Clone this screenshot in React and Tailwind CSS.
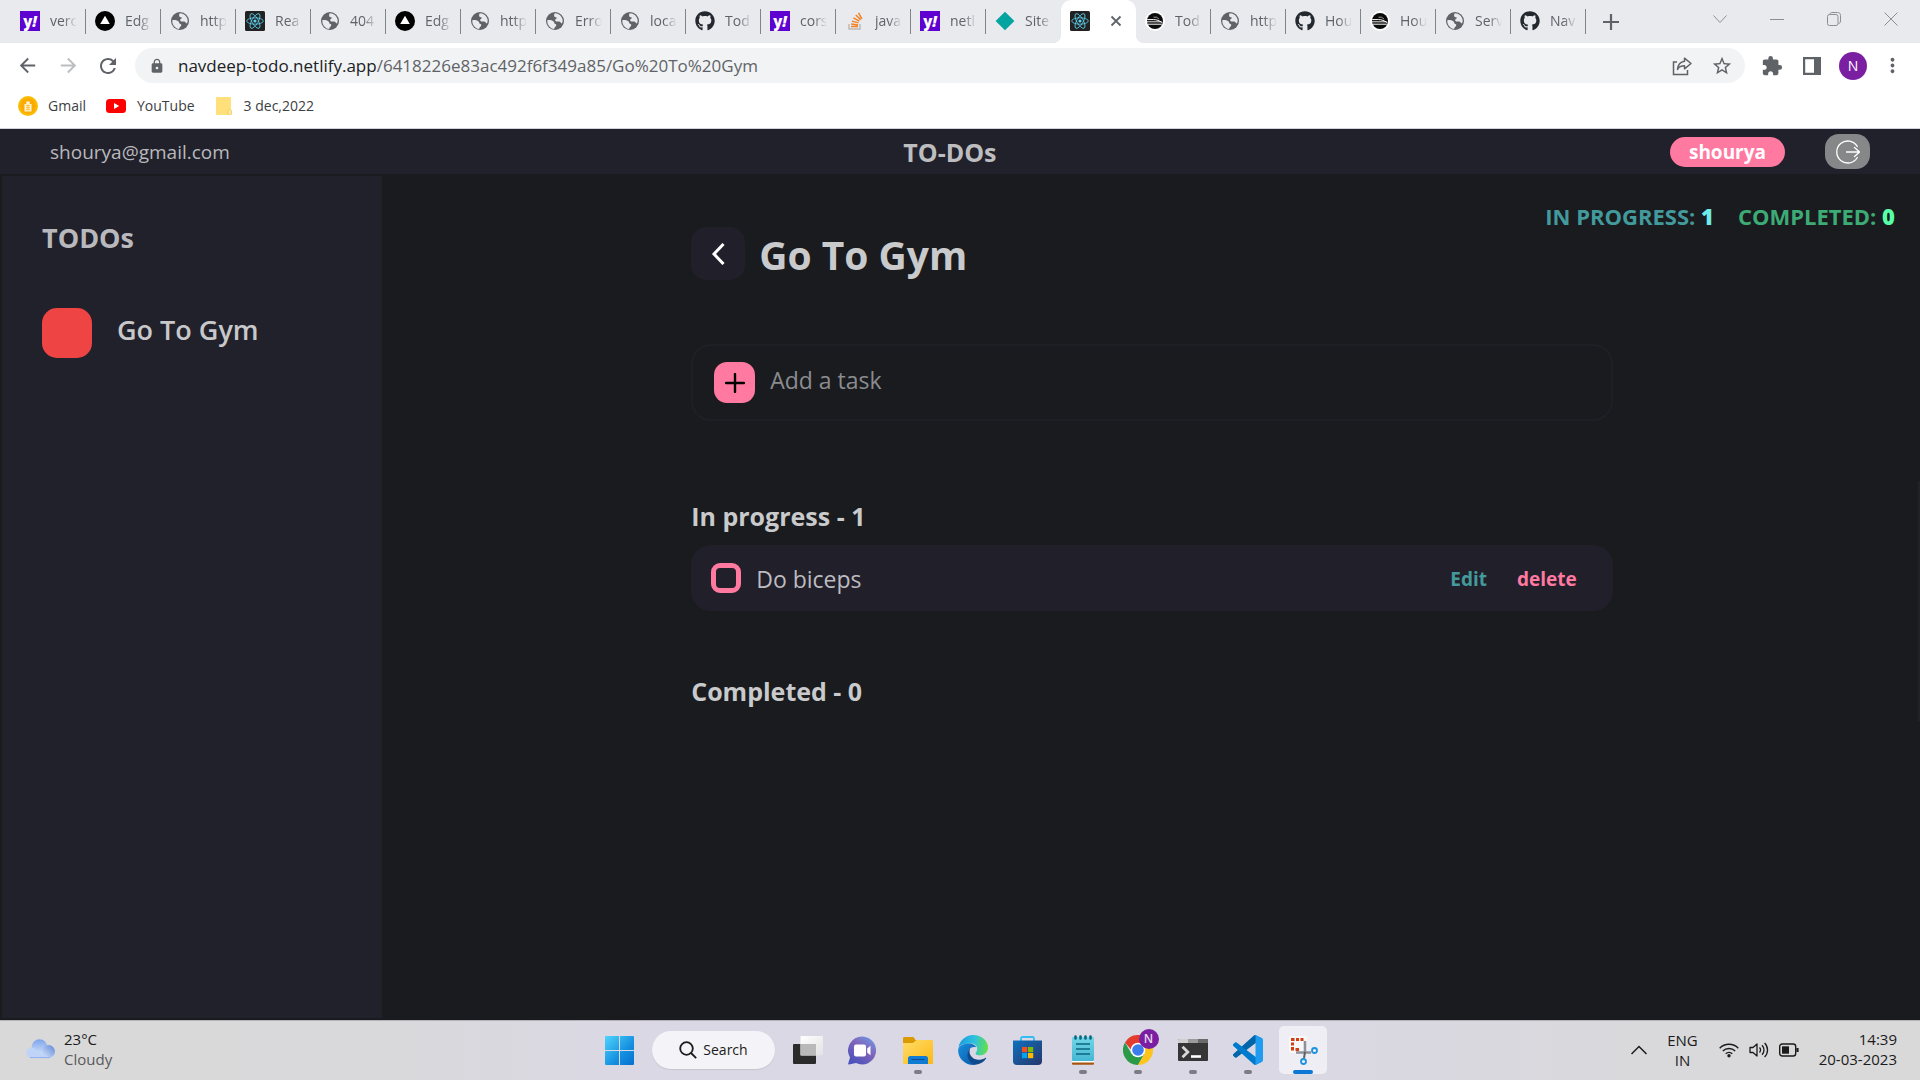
import React from "react";
import { FaGithub } from "react-icons/fa";
import {
  MdArrowBack,
  MdArrowForward,
  MdExtension,
  MdLock,
  MdMoreVert,
  MdRefresh,
  MdStarOutline,
} from "react-icons/md";

/* ---------- favicons ---------- */

function Yahoo() {
  return (
    <span className="flex size-5 items-center justify-center bg-[#5f01d1] text-[15px] leading-5 font-extrabold text-white">
      y<i>!</i>
    </span>
  );
}

function Vercel() {
  return (
    <svg viewBox="0 0 20 20" className="size-5">
      <circle cx="10" cy="10" r="10" fill="#000" />
      <path d="M10 4.8 14.8 13H5.2z" fill="#fff" />
    </svg>
  );
}

function Globe() {
  return (
    <svg viewBox="0 0 20 20" className="size-5">
      <circle cx="10" cy="10" r="9" fill="#5f6368" />
      <path
        d="M2.300 9.200c2.200-.3 4.600 0 6 1.100 1.200 1 .6 2.300 2 2.600 1.300.2 1.200 1.600.3 2.500-.9.800-1.400 1.500-1.500 2.500-3.700-.4-7.100-3.700-6.800-8.700z"
        fill="#e8eaed"
      />
      <path
        d="M9.800 2.200c3.500-.2 7.800 2.900 7.900 7.400-.1 1.300-.3 2-.7 2.900-1-.2-1.200-1.300-2.200-1.800-1.300-.5-3.300.3-4.300-.7-.8-.9-.1-2 .9-2.400 1-.3.500-1.200-.6-1.300-1.400-.2-1.900-1.300-1.700-2.300.1-.8.200-1.300.7-1.800z"
        fill="#e8eaed"
      />
    </svg>
  );
}

function ReactLogo() {
  return (
    <svg viewBox="0 0 20 20" className="size-5">
      <rect width="20" height="20" rx="1.5" fill="#222" />
      <g fill="none" stroke="#5ccfee" strokeWidth=".8">
        <ellipse cx="10" cy="10" rx="8.3" ry="3.2" />
        <ellipse cx="10" cy="10" rx="8.3" ry="3.2" transform="rotate(60 10 10)" />
        <ellipse cx="10" cy="10" rx="8.3" ry="3.2" transform="rotate(120 10 10)" />
      </g>
      <circle cx="10" cy="10" r="1.6" fill="#5ccfee" />
    </svg>
  );
}

function Github() {
  return <FaGithub className="size-5 text-[#24292f]" />;
}

function Stack() {
  return (
    <svg viewBox="0 0 20 20" className="size-5" fill="none" strokeWidth="1.5">
      <path d="M4 13v5h11v-5" stroke="#bcbbbb" />
      <path
        d="M6 15.6h7M6.2 13.1l6.9.8M6.9 10.1l6.6 1.8M8.4 6.9l6 3.3M10.8 4l4.9 4.8M13.6 1.8l3.2 6"
        stroke="#f48024"
      />
    </svg>
  );
}

function Diamond() {
  return (
    <svg viewBox="0 0 20 20" className="size-5">
      <path d="M10 .8 19.4 10 10 19.2.6 10z" fill="#05a4a0" />
    </svg>
  );
}

function Train() {
  return (
    <svg viewBox="0 0 20 20" className="size-5">
      <circle cx="10" cy="10" r="10" fill="#fff" />
      <circle cx="10" cy="10" r="8" fill="#0b0b0b" />
      <g stroke="#fff" fill="none">
        <path d="M2.2 8.6h6.5c3 0 5.5 1 8.6 3.1" strokeWidth="1" />
        <path d="M2 10.8h14.5" strokeWidth=".9" />
        <path d="M2.6 13.2h14.2" strokeWidth="1" />
        <path d="M8.5 6.2h3l2.6 1.9" strokeWidth=".6" />
      </g>
    </svg>
  );
}

const tabs = [
  ["verc", Yahoo],
  ["Edg", Vercel],
  ["http", Globe],
  ["Rea", ReactLogo],
  ["404", Globe],
  ["Edg", Vercel],
  ["http", Globe],
  ["Erro", Globe],
  ["loca", Globe],
  ["Tod", Github],
  ["cors", Yahoo],
  ["java", Stack],
  ["netl", Yahoo],
  ["Site", Diamond],
  ["", ReactLogo],
  ["Tod", Train],
  ["http", Globe],
  ["Hou", Github],
  ["Hou", Train],
  ["Serv", Globe],
  ["Nav", Github],
];
const ACTIVE = 14;

function TabStrip() {
  return (
    <div className="flex h-[43px] items-stretch bg-[#e8eaed] pl-[11px]">
      <div role="tablist" className="flex min-w-0">
        {tabs.map(([label, Icon], i) =>
          i === ACTIVE ? (
            <div key={i} role="tab" aria-selected="true" className="relative flex w-[75px] items-center rounded-t-[10px] bg-white pb-[2px] pl-[9px]">
              <span className="absolute bottom-0 -left-2 size-2 bg-[radial-gradient(circle_at_0_0,#e8eaed_8px,#fff_8px)]" />
              <Icon />
              <button aria-label="Close tab" className="ml-[20px]">
                <svg viewBox="0 0 12 12" className="size-3 stroke-[#5f6368]" strokeWidth="1.8">
                  <path d="m1.5 1.5 9 9m0-9-9 9" />
                </svg>
              </button>
              <span className="absolute -right-2 bottom-0 size-2 bg-[radial-gradient(circle_at_100%_0,#e8eaed_8px,#fff_8px)]" />
            </div>
          ) : (
            <button
              key={i}
              role="tab"
              aria-selected="false"
              className="flex w-[75px] items-center"
            >
              <span className="flex w-[74px] items-center gap-[10px] pb-[2px] pl-[9px]">
                <span className="flex size-5 shrink-0 items-center justify-center">
                  <Icon />
                </span>
                <span className="w-[27px] overflow-hidden text-left text-[14px] leading-5 whitespace-nowrap text-[#5f6368] [mask-image:linear-gradient(to_right,#000_50%,transparent)]">
                  {label}
                </span>
              </span>
              {i !== ACTIVE - 1 && <span className="h-[25px] w-px bg-[#808387]" />}
            </button>
          )
        )}
      </div>
      <button aria-label="New tab" className="ml-[17px]">
        <svg viewBox="0 0 16 16" className="size-4 stroke-[#5f6368]" strokeWidth="2.200">
          <path d="M8 0v16M0 8h16" />
        </svg>
      </button>
      <div className="ml-auto flex items-center gap-[43px] pr-[22px] pb-[6px]">
        <button aria-label="Search tabs">
          <svg viewBox="0 0 14 14" className="size-[14px] fill-none stroke-[#8c8e91]">
            <path d="m.5 3.500 6.500 7 6.500-7" />
          </svg>
        </button>
        <button aria-label="Minimize">
          <svg viewBox="0 0 14 14" className="size-[14px] fill-none stroke-[#8c8e91]">
            <path d="M0 7.500h14" />
          </svg>
        </button>
        <button aria-label="Restore">
          <svg viewBox="0 0 14 14" className="size-[14px] fill-none stroke-[#8c8e91]">
            <rect x=".5" y="2.500" width="10.500" height="11" rx="2" />
            <path d="M3 2.500C3 1 4 .5 5 .5h5.500c2 0 3 1 3 3V9c0 1.500-.8 2.500-2 2.500" />
          </svg>
        </button>
        <button aria-label="Close">
          <svg viewBox="0 0 14 14" className="size-[14px] fill-none stroke-[#8c8e91]">
            <path d="m.5.5 13 13m0-13-13 13" />
          </svg>
        </button>
      </div>
    </div>
  );
}

function Toolbar() {
  return (
    <div className="flex h-[45px] items-center bg-white pr-4 pl-4 text-[#5f6368]">
      <button aria-label="Back" className="mr-[18px]">
        <MdArrowBack className="size-[23px]" />
      </button>
      <button aria-label="Forward" className="mr-4 text-[#bbbdc0]">
        <MdArrowForward className="size-[23px]" />
      </button>
      <button aria-label="Reload" className="mr-[15px]">
        <MdRefresh className="size-6" />
      </button>
      <div className="flex h-[35px] min-w-0 flex-1 items-center rounded-full bg-[#f1f3f4] pr-[12px] pl-[14px]">
        <MdLock className="size-4 shrink-0" />
        <div className="ml-[13px] min-w-0 flex-1 truncate text-[17px] leading-6">
          <span className="text-[#202124]">navdeep-todo.netlify.app</span>
          /6418226e83ac492f6f349a85/Go%20To%20Gym
        </div>
        <button aria-label="Share" className="mr-[19px]">
          <svg viewBox="0 0 20 20" className="size-5 fill-none stroke-current" strokeWidth="1.500">
            <path d="M5 6H1.500v12.500h14V14" />
            <path d="M12.500 2.200 19 7.500l-6.500 5.300V9.800c-3.500 0-5.700 1.300-7 3.700.4-4.500 2.700-7.500 7-8.200z" strokeLinejoin="round" />
          </svg>
        </button>
        <button aria-label="Bookmark this page">
          <MdStarOutline className="size-[22px]" />
        </button>
      </div>
      <button aria-label="Extensions" className="ml-4">
        <MdExtension className="size-[22px]" />
      </button>
      <button aria-label="Side panel" className="ml-5">
        <svg viewBox="0 0 18 18" className="size-[18px]">
          <path fill="currentColor" fillRule="evenodd" d="M0 0h18v18H0zM2.200 2.200v13.600H11V2.200z" />
        </svg>
      </button>
      <button className="ml-[18px] flex size-7 items-center justify-center rounded-full bg-[#7b1fa2] text-[14px] text-white">
        N
      </button>
      <button aria-label="Menu" className="ml-[14px]">
        <MdMoreVert className="size-[23px]" />
      </button>
    </div>
  );
}

function Bookmarks() {
  return (
    <nav className="flex h-[41px] items-center border-b border-[#d5d0e0] bg-white pb-[4px] pl-[18px] text-[14px] leading-5 text-[#3c4043]">
      <a href="#gmail" className="flex items-center gap-[10px]">
        <svg viewBox="0 0 20 20" className="size-5">
          <circle cx="10" cy="10" r="10" fill="#fbbc04" />
          <circle cx="10" cy="10" r="7.800" fill="#f9ab00" />
          <path d="M6.500 8h7v7.500h-7zM8.300 5.500h3.400V8H8.300z" fill="#fff4d6" />
          <path d="M8 9.500h4M8 11.500h4M8 13.500h4M9.300 8.500v6M10.800 8.500v6" stroke="#f9ab00" strokeWidth=".5" />
        </svg>
        Gmail
      </a>
      <a href="#youtube" className="ml-5 flex items-center gap-[11px]">
        <svg viewBox="0 0 20 14" className="h-[14px] w-5">
          <rect width="20" height="14" rx="3.500" fill="#f00" />
          <path d="m8 4 5.200 3L8 10z" fill="#fff" />
        </svg>
        YouTube
      </a>
      <a href="#folder" className="ml-[21px] flex items-center gap-[12px]">
        <svg viewBox="0 0 16 18" className="h-[18px] w-4">
          <rect width="15" height="18" rx="1" fill="#ffe07a" />
          <path d="M12 18v-4c0-2 3.500-2 3.500 0v3c0 .6-.4 1-1 1z" fill="#ffe9a2" stroke="#f0c64a" strokeWidth=".7" />
        </svg>
        3 dec,2022
      </a>
    </nav>
  );
}

/* ---------- to-do page ---------- */

function TodoHeader() {
  return (
    <header className="flex h-[45px] items-center justify-between bg-[#21212b] px-[50px]">
      <span className="text-[19px] leading-6 text-[#b9b9bd]">shourya@gmail.com</span>
      <h1 className="text-[25px] leading-8 font-bold text-[#bdbdc0]">TO-DOs</h1>
      <div className="flex items-center gap-[40px]">
        <button className="h-[30px] w-[115px] rounded-[15px] bg-[#ff79a1] text-[19px] leading-[30px] font-bold text-white">
          shourya
        </button>
        <button
          aria-label="Log out"
          className="flex h-[35px] w-[45px] items-center justify-center rounded-[14px] bg-[#868789]"
        >
          <svg viewBox="0 0 24 24" className="size-6 fill-none stroke-white" strokeWidth="1.300" strokeLinecap="round">
            <path d="M21.300 6.500a11 11 0 1 0 0 11" />
            <path d="M10.500 12h13M18.500 7.500l5 4.500-5 4.500" />
          </svg>
        </button>
      </div>
    </header>
  );
}

function Sidebar() {
  return (
    <aside className="flex w-1/5 p-[2px]">
      <div className="flex-1 bg-[#21212b] px-[40px] pt-[42px]">
        <h2 className="text-[27px] leading-10 font-bold text-[#b9b9bd]">TODOs</h2>
        <a href="#go-to-gym" className="mt-[50px] flex gap-[25px]">
          <span className="size-[50px] rounded-[15px] bg-[#ef4444]" />
          <span className="text-[27px] leading-[44px] font-semibold text-[#c8c8ca]">Go To Gym</span>
        </a>
      </div>
    </aside>
  );
}

function Main() {
  return (
    <main className="relative flex flex-1 flex-col pt-[31px]">
      <span className="absolute top-[307px] right-0 h-60 w-[2px] bg-[#212128]" />
      <div className="flex h-[22px] items-center justify-end gap-6 pr-[25px] text-[22px] leading-[22px] font-bold">
        <p className="text-[#439a9d]">
          IN PROGRESS: <b className="font-extrabold text-[#6feaea]">1</b>
        </p>
        <p className="text-[#3cab75]">
          COMPLETED: <b className="font-extrabold text-[#57ffa8]">0</b>
        </p>
      </div>
      <div className="mx-auto w-3/5">
        <div className="flex items-center gap-[14px]">
          <button
            aria-label="Back to list"
            className="flex h-[53px] w-[54px] items-center justify-center rounded-[15px] bg-[#211f2a]"
          >
            <svg viewBox="0 0 14 22" className="h-[22px] w-[14px] fill-none stroke-white" strokeWidth="3">
              <path d="M12.500 1 3 11l9.500 10" />
            </svg>
          </button>
          <h2 className="pt-[2px] text-[39px] leading-[51px] font-bold text-[#c9cacb]">Go To Gym</h2>
        </div>

        <form className="mt-[64px] flex h-[77px] items-center gap-[15px] rounded-[20px] border-2 border-[#1f1f25] px-[21px]">
          <button
            type="button"
            aria-label="Add"
            className="flex size-[41px] shrink-0 items-center justify-center rounded-[13px] bg-[#ff79a1]"
          >
            <svg viewBox="0 0 20 20" className="size-5 stroke-black" strokeWidth="2.400" strokeLinecap="round">
              <path d="M10 1v18M1 10h18" />
            </svg>
          </button>
          <input
            type="text"
            aria-label="Add a task"
            placeholder="Add a task"
            className="min-w-0 flex-1 bg-transparent pb-[5px] text-[23px] leading-8 font-medium text-[#c9cacb] outline-none placeholder:text-[#8b8c8f]"
          />
        </form>

        <h3 className="mt-[75px] mb-[9px] text-[25px] leading-10 font-bold text-[#c9cacb]">In progress - 1</h3>
        <div className="flex h-[66px] items-center rounded-[20px] bg-[#211f2a] pr-[36px] pl-[20px]">
          <input
            id="task-1"
            type="checkbox"
            className="size-[30px] appearance-none rounded-[9px] border-[5px] border-[#ff79a1] checked:bg-[#ff79a1]"
          />
          <label htmlFor="task-1" className="ml-[15px] flex-1 pt-[2px] text-[23px] leading-8 text-[#bcbcc0]">
            Do biceps
          </label>
          <div className="flex gap-[30px] pt-[2px] text-[19px] leading-8 font-bold">
            <button className="text-[#439a9d]">Edit</button>
            <button className="text-[#ff79a1]">delete</button>
          </div>
        </div>

        <h3 className="mt-[60px] text-[25px] leading-10 font-bold text-[#c9cacb]">Completed - 0</h3>
      </div>
    </main>
  );
}

/* ---------- taskbar ---------- */

function Windows() {
  return (
    <svg viewBox="0 0 29 29" className="size-[29px]">
      <defs>
        <linearGradient id="win" x1="0" y1="0" x2="29" y2="29" gradientUnits="userSpaceOnUse">
          <stop stopColor="#4fd4fd" />
          <stop offset=".6" stopColor="#1590e0" />
          <stop offset="1" stopColor="#0670cf" />
        </linearGradient>
      </defs>
      <path
        fill="url(#win)"
        d="M1 0h13v14H0V1a1 1 0 0 1 1-1zM15 0h13a1 1 0 0 1 1 1v13H15zM0 15h14v14H1a1 1 0 0 1-1-1zM15 15h14v13a1 1 0 0 1-1 1H15z"
      />
    </svg>
  );
}

function TaskView() {
  return (
    <svg viewBox="0 0 30 28" className="h-7 w-[30px]">
      <defs>
        <linearGradient id="tv" x1="0" y1="0" x2="1" y2="1">
          <stop stopColor="#fff" />
          <stop offset="1" stopColor="#e2e2e2" />
        </linearGradient>
      </defs>
      <rect y="8" width="23" height="20" rx="1" fill="#2b2b2b" />
      <rect x="7.500" width="22.500" height="19.500" rx="1" fill="url(#tv)" />
      <path d="M7.500 8H23v11.500H7.500z" fill="#b9b9b9" />
    </svg>
  );
}

function Chat() {
  return (
    <svg viewBox="0 0 29 29" className="size-[29px]">
      <defs>
        <linearGradient id="chat" x1="1" y1="0" x2=".3" y2="1">
          <stop stopColor="#6fa0ee" />
          <stop offset=".5" stopColor="#8064b8" />
          <stop offset="1" stopColor="#4b53bc" />
        </linearGradient>
      </defs>
      <path d="M14.500.5a14 14 0 1 1-6.500 26.600L1 28.500c-.6.100-1-.4-.8-1L2 21.500A14 14 0 0 1 14.500.500z" fill="url(#chat)" />
      <rect x="6" y="8.500" width="12" height="12" rx="2" fill="#fff" />
      <path d="m19.200 12.500 3.300-2.700v9.500l-3.300-2.600z" fill="#fff" />
    </svg>
  );
}

function Explorer() {
  return (
    <svg viewBox="0 0 30 27" className="h-[27px] w-[30px]">
      <defs>
        <linearGradient id="fold" x1="0" y1="0" x2="1" y2="1">
          <stop stopColor="#ffdc6b" />
          <stop offset="1" stopColor="#fdb913" />
        </linearGradient>
      </defs>
      <path d="M1 0h9.500l2 3H20v8H0V1z" fill="#dc9a02" />
      <path d="M0 6h10l3.500-3H29a1 1 0 0 1 1 1v22a1 1 0 0 1-1 1H1a1 1 0 0 1-1-1z" fill="url(#fold)" />
      <path d="M5 27v-5.500a2.500 2.500 0 0 1 2.500-2.500h15a2.500 2.500 0 0 1 2.500 2.500V27z" fill="#0f7bd3" />
      <path d="M8.500 22.500h13" stroke="#0a4d92" />
    </svg>
  );
}

function Edge() {
  return (
    <svg viewBox="0 0 30 30" className="size-[30px]">
      <defs>
        <linearGradient id="edge-a" x1="0" y1=".3" x2="1" y2=".4">
          <stop stopColor="#1a9be0" />
          <stop offset=".55" stopColor="#2fc2dc" />
          <stop offset="1" stopColor="#62e046" />
        </linearGradient>
        <linearGradient id="edge-b" x1="0" y1="0" x2="1" y2="1">
          <stop stopColor="#1690dd" />
          <stop offset="1" stopColor="#0b55a8" />
        </linearGradient>
      </defs>
      <path d="M.4 13A15 15 0 0 1 15 0c9 0 15 6 15 12.500 0 5-4 7.800-8 7.800-3.600 0-5.200-1.400-4-2.900 2.400-3 1.600-8.600-5-8.900C7 8.200 2 9.500.400 13z" fill="url(#edge-a)" />
      <path d="M.2 14.500C1 10.500 6 8 12 8.500c3 .3 5.200 1.700 6.200 3.700-5.500-1.500-9.200 2.800-8.200 8 .9 4.300 3.800 7.600 7.600 9.600C8 31-.6 23.500.200 14.500z" fill="url(#edge-b)" />
      <path d="M12.500 13c-2.800 4.600.8 11.400 7.500 11.700 2.800.100 5.200-.6 7.400-1.800.5-.3 1 .2.7.7-2.300 3.500-6 5.900-10.600 6.200C10 28 6.500 18 12.500 13z" fill="#114a8b" />
    </svg>
  );
}

function Store() {
  return (
    <svg viewBox="0 0 29 29" className="size-[29px]">
      <defs>
        <linearGradient id="store" x1="0" y1="0" x2="1" y2="1">
          <stop stopColor="#0f70be" />
          <stop offset="1" stopColor="#26366b" />
        </linearGradient>
      </defs>
      <path d="M8 6V2.500A1.500 1.500 0 0 1 9.500 1h10A1.500 1.500 0 0 1 21 2.500V6" fill="none" stroke="#34bdf2" strokeWidth="1.800" />
      <path d="M0 4.500h29V25a4 4 0 0 1-4 4H4a4 4 0 0 1-4-4z" fill="url(#store)" />
      <path d="M9 11h5.200v5.200H9z" fill="#f25022" />
      <path d="M15 11h5.200v5.200H15z" fill="#7fba00" />
      <path d="M9 17h5.200v5.200H9z" fill="#00a4ef" />
      <path d="M15 17h5.200v5.200H15z" fill="#ffb900" />
    </svg>
  );
}

function Notepad() {
  return (
    <svg viewBox="0 0 22 30" className="h-[30px] w-[22px]">
      <defs>
        <linearGradient id="note" x1="0" y1="0" x2="0" y2="1">
          <stop stopColor="#72d6e6" />
          <stop offset="1" stopColor="#45b7d3" />
        </linearGradient>
      </defs>
      <rect y="26.500" width="22" height="3.300" rx="1" fill="#a65410" />
      <rect y="25" width="22" height="2.500" fill="#fff" />
      <rect y="2" width="22" height="24" rx="1" fill="url(#note)" />
      <path d="M4 9h14M4 14h14M4 19h14" stroke="#0b6580" strokeWidth="1.700" />
      <path d="M3.500 1.500v2M8.500 1.500v2M13.500 1.500v2M18.500 1.500v2" stroke="#0b6580" strokeWidth="2.600" strokeLinecap="round" />
    </svg>
  );
}

function Chrome() {
  return (
    <span className="relative">
      <svg viewBox="0 0 30 30" className="size-[30px]">
        <path d="M2 7.500a15 15 0 0 1 26 0L21.500 15h-13z" fill="#e33b2e" />
        <path d="M2 7.500A15 15 0 0 0 15 30l6.500-11.200L8.500 18.700z" fill="#2a9a48" />
        <path d="M28 7.500A15 15 0 0 1 15 30l6.500-11.200V7.500z" fill="#fdc51b" />
        <path d="M15 7.500h13l-2-2.700H13z" fill="#e33b2e" />
        <circle cx="15" cy="15" r="7.300" fill="#fff" />
        <circle cx="15" cy="15" r="5.800" fill="#3b7ded" />
      </svg>
      <span className="absolute -top-[6px] -right-[6px] flex size-5 items-center justify-center rounded-full bg-[#7b1fa2] text-[12px] leading-5 font-semibold text-[#e6d5ee]">
        N
      </span>
    </span>
  );
}

function Terminal() {
  return (
    <svg viewBox="0 0 30 22" className="h-[22px] w-[30px]">
      <rect width="30" height="22" rx="1" fill="#363636" />
      <path d="M0 4V1a1 1 0 0 1 1-1h9v4z" fill="#cfcfcf" />
      <path d="M10 0h10v4H10z" fill="#9b9b9b" />
      <path d="M20 0h9a1 1 0 0 1 1 1v3H20z" fill="#6b6b6b" />
      <path d="m4.500 7.800 5.300 5.200-5.300 5.200" fill="none" stroke="#d8d8d8" strokeWidth="2.800" />
      <path d="M13 17.500h10" stroke="#fff" strokeWidth="2.600" />
    </svg>
  );
}

function VsCode() {
  return (
    <svg viewBox="0 0 100 100" className="size-[30px]">
      <path d="M96.500 10.800 75.900.900a6.200 6.200 0 0 0-7.100 1.200L1.300 63.600a4.200 4.200 0 0 0 0 6.200l5.500 5a4.200 4.200 0 0 0 5.300.200l81.200-61.600c2.700-2.100 6.700-.1 6.700 3.300v-.2a6.300 6.300 0 0 0-3.500-5.700z" fill="#0065a9" />
      <path d="m96.500 89.200-20.600 9.900a6.200 6.200 0 0 1-7.100-1.200L1.300 36.400a4.200 4.200 0 0 1 0-6.200l5.500-5a4.200 4.200 0 0 1 5.300-.2l81.200 61.600c2.700 2.100 6.700.1 6.700-3.300v.2a6.300 6.300 0 0 1-3.500 5.700z" fill="#007acc" />
      <path d="M75.900 99.100a6.200 6.200 0 0 1-7.100-1.200c2.300 2.300 6.200.7 6.200-2.600V4.700c0-3.300-3.900-4.900-6.200-2.600a6.200 6.200 0 0 1 7.100-1.200l20.600 9.900a6.300 6.300 0 0 1 3.500 5.700v67a6.300 6.300 0 0 1-3.500 5.700z" fill="#1f9cf0" />
    </svg>
  );
}

function Snip() {
  return (
    <svg viewBox="0 0 30 30" className="size-[30px] fill-none">
      <rect x="1" y="1" width="18" height="17" rx="2" fill="#f8f8fa" />
      <path
        d="M3 3h3.500v3H3zM8 3h3v3H8zM12.500 3h3v3h-3zM3 7.500h3v3H3zM3 12h3v3.500H3zM7.500 13h3.500v3H7.500z"
        fill="#d23e0f"
      />
      <path d="M17 6v12M8 17.500h15" stroke="#8d9096" strokeWidth="2.600" />
      <path d="m17 17-1 6" stroke="#5d6066" strokeWidth="2" />
      <circle cx="15.500" cy="26.500" r="2.500" stroke="#1e93dd" strokeWidth="1.800" />
      <circle cx="26.500" cy="15.500" r="2.500" stroke="#1e93dd" strokeWidth="1.800" />
    </svg>
  );
}

const apps = [
  ["Task view", TaskView, false],
  ["Chat", Chat, false],
  ["File Explorer", Explorer, true],
  ["Edge", Edge, false],
  ["Store", Store, false],
  ["Notepad", Notepad, true],
  ["Chrome", Chrome, true],
  ["Terminal", Terminal, true],
  ["Visual Studio Code", VsCode, true],
];

function Taskbar() {
  return (
    <footer className="grid h-[60px] grid-cols-[1fr_auto_1fr] items-center border-t border-[#b4b2b8] bg-[linear-gradient(to_right,#d9d9d9_0%,#d9d9db_20%,#dbd8e6_36%,#dad8e4_66%,#d9d9dc_85%,#d9d9d9_100%)] pb-px text-[15px] leading-5 text-[#1b1b1b]">
      <button className="flex items-center gap-[9px] justify-self-start pb-[3px] pl-[25px] text-left">
        <svg viewBox="0 0 30 20" className="h-5 w-[30px]">
          <defs>
            <linearGradient id="cloud" x1="0" y1="0" x2="0" y2="1">
              <stop stopColor="#7ea4ea" />
              <stop offset="1" stopColor="#cfe2fb" />
            </linearGradient>
            <linearGradient id="cloud-r" x1="1" y1="0" x2="0" y2="1">
              <stop stopColor="#5f86d8" />
              <stop offset="1" stopColor="#d9e8fc" />
            </linearGradient>
          </defs>
          <circle cx="14.500" cy="8" r="7.800" fill="url(#cloud)" />
          <circle cx="23.500" cy="12.500" r="6.500" fill="url(#cloud-r)" />
          <path d="M6 8.500c4 0 6 3 8 4.500l10 6H6A5.300 5.300 0 0 1 6 8.500z" fill="#bfd4f7" />
          <path d="M5 18.600h20" stroke="#8fb0ef" />
        </svg>
        <span>
          23°C
          <br />
          <span className="text-[#5a5a5a]">Cloudy</span>
        </span>
      </button>

      <div className="flex items-center pl-[3px]">
        <button aria-label="Start" className="flex w-[55px] justify-center">
          <Windows />
        </button>
        <button className="mx-[5px] flex h-[38px] w-[123px] items-center justify-center gap-[6px] rounded-full bg-[#f4f3f7] text-[14px] shadow-[0_1px_1px_#c8c5d0]">
          <svg viewBox="0 0 18 18" className="size-[18px] fill-none stroke-[#1b1b1b]" strokeWidth="1.800">
            <circle cx="7.500" cy="7.500" r="6.300" />
            <path d="m12 12 5.200 5.200" />
          </svg>
          Search
        </button>
        {apps.map(([name, Icon, running]) => (
          <button key={name} aria-label={name} className="relative flex h-12 w-[55px] items-center justify-center">
            <Icon />
            {running && <span className="absolute bottom-0 h-1 w-2 rounded-full bg-[#7d7b84]" />}
          </button>
        ))}
        <button
          aria-label="Snipping Tool"
          className="relative mx-[4px] flex size-12 items-center justify-center rounded-[5px] bg-[#efeef4]"
        >
          <Snip />
          <span className="absolute bottom-0 h-1 w-5 rounded-full bg-[#0a78d4]" />
        </button>
      </div>

      <div className="flex items-center justify-self-end pr-[23px]">
        <button aria-label="Show hidden icons">
          <svg viewBox="0 0 16 10" className="h-[10px] w-4 fill-none stroke-[#1b1b1b]" strokeWidth="1.500">
            <path d="m.5 9 7.500-7.500L15.500 9" />
          </svg>
        </button>
        <button className="ml-[20px] text-center">
          ENG
          <br />
          IN
        </button>
        <button aria-label="Network, volume and battery" className="ml-[21px] flex items-center gap-[10px]">
          <svg viewBox="0 0 20 16" className="h-4 w-5 fill-none stroke-[#1b1b1b]" strokeWidth="1.400">
            <path d="M.7 6.200a13 13 0 0 1 18.600 0M3.800 9a8.800 8.800 0 0 1 12.400 0M6.700 11.800a4.800 4.800 0 0 1 6.600 0" />
            <circle cx="10" cy="13.800" r="1.700" fill="#1b1b1b" stroke="none" />
          </svg>
          <svg viewBox="0 0 20 16" className="h-4 w-5 fill-none stroke-[#1b1b1b]" strokeWidth="1.300">
            <path d="M1 5.500h3L8 2v12l-4-3.500H1z" strokeLinejoin="round" />
            <path d="M10.500 5.500a3.500 3.500 0 0 1 0 5M13 3.300a6.500 6.500 0 0 1 0 9.400M15.600 1a9.800 9.800 0 0 1 0 14" />
          </svg>
          <svg viewBox="0 0 20 14" className="h-[14px] w-5 fill-none stroke-[#1b1b1b]" strokeWidth="1.400">
            <rect x=".7" y="1" width="16" height="12" rx="2.500" />
            <path d="M3 3.300h7v7.400H3z" fill="#1b1b1b" stroke="none" />
            <path d="M18.500 5v4" strokeWidth="2.200" />
          </svg>
        </button>
        <button className="ml-[20px] pb-[3px] text-right">
          14:39
          <br />
          20-03-2023
        </button>
      </div>
    </footer>
  );
}

export default function App() {
  return (
    <div className="flex min-h-screen flex-col bg-[#1a1b1f] font-['Open_Sans',sans-serif]">
      <TabStrip />
      <Toolbar />
      <Bookmarks />
      <TodoHeader />
      <div className="flex flex-1">
        <Sidebar />
        <Main />
      </div>
      <Taskbar />
    </div>
  );
}
